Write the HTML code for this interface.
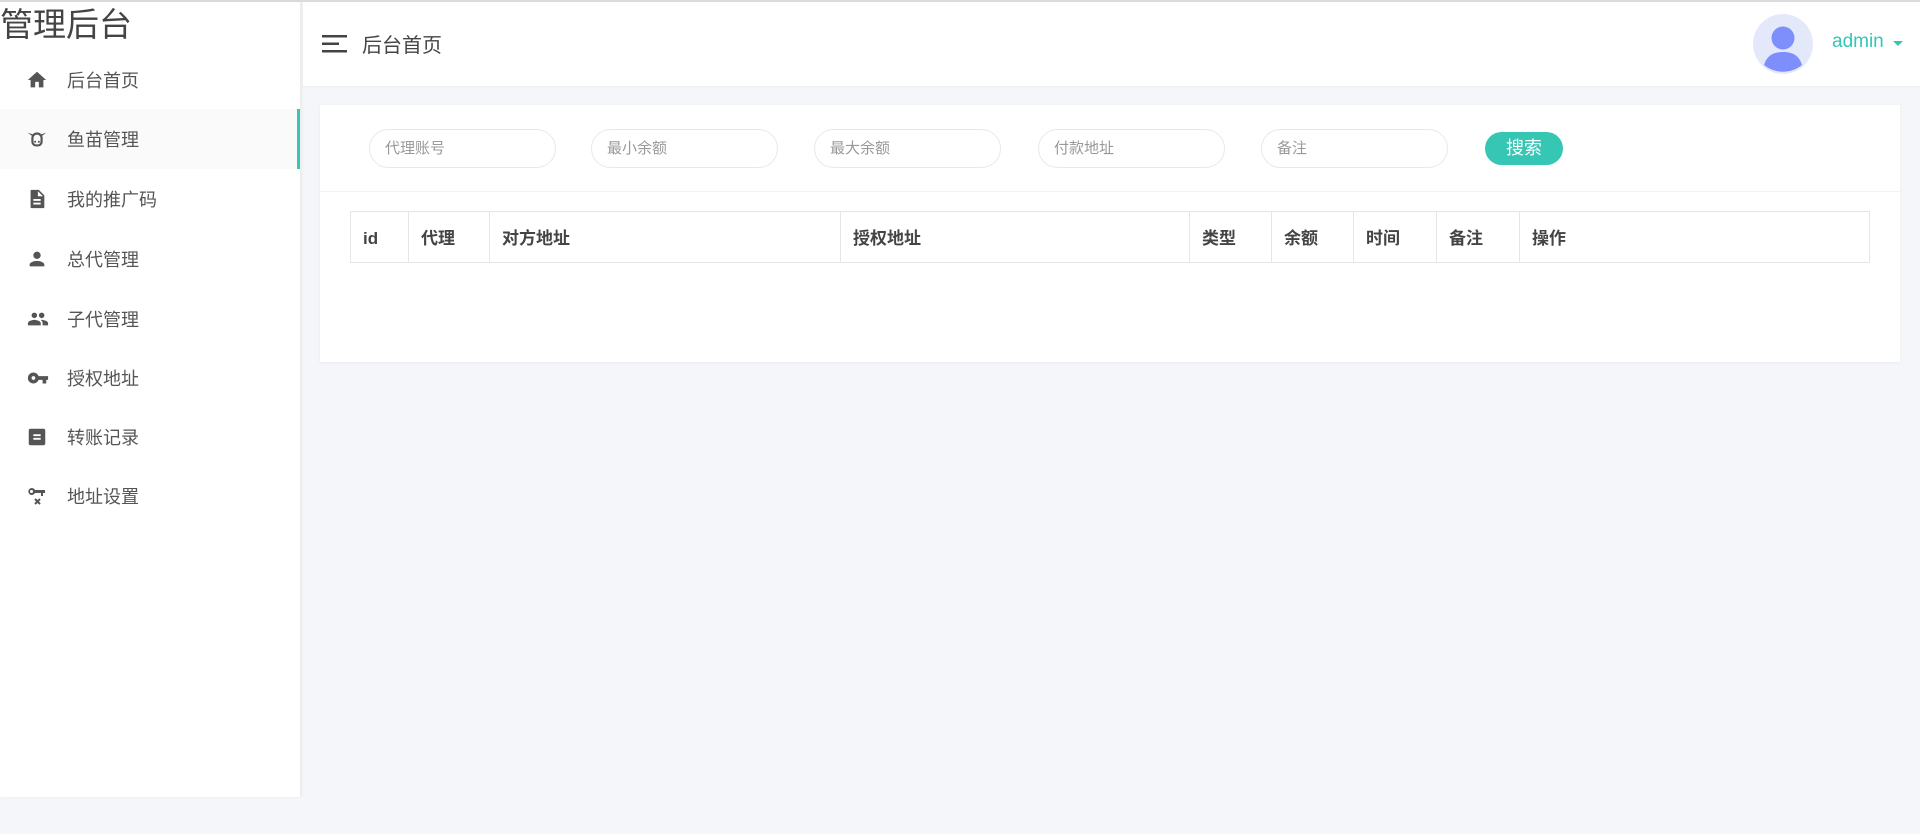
<!DOCTYPE html>
<html><head><meta charset="utf-8"><style>
*{margin:0;padding:0;box-sizing:border-box}
body{width:1920px;height:834px;overflow:hidden;background:#f4f6f9;font-family:"Liberation Sans","Noto Sans CJK SC",sans-serif;color:#555;position:relative}
.top{position:absolute;left:0;top:0;width:1920px;height:2px;background:#dcdcdc}
.side{position:absolute;left:0;top:2px;width:300px;height:795px;background:#fff;box-shadow:2px 0 3px rgba(0,0,0,.05)}
.logo{position:absolute;left:0;top:2px;font-size:33px;color:#444;line-height:42px}
.item{position:absolute;left:0;width:300px;height:60px;font-size:18px;color:#555}
.item span{position:absolute;left:67px;top:50%;transform:translateY(-50%);white-space:nowrap}
.item svg{position:absolute;left:26px;top:50%;transform:translateY(-50%)}
.active{background:#fafafa;border-right:3px solid #35c6b4}
.hdr{position:absolute;left:303px;top:2px;width:1617px;height:84px;background:#fff;box-shadow:0 1px 2px rgba(0,0,0,.04)}
.card{position:absolute;left:320px;top:105px;width:1580px;height:257px;background:#fff;box-shadow:0 1px 3px rgba(0,0,0,.05)}
.inp{position:absolute;top:24px;width:187px;height:39px;border:1px solid #e8e8e8;border-radius:20px;font-size:15px;color:#999;padding-left:15px;line-height:38px}
.btn{position:absolute;left:1165px;top:27px;width:78px;height:33px;background:#35c6b4;border-radius:17px;color:#fff;font-size:18px;text-align:center;line-height:33px}
.sep{position:absolute;left:0;top:86px;width:1580px;height:1px;background:#f2f2f2}
table{position:absolute;left:30px;top:106px;width:1520px;border-collapse:collapse;font-size:17px;font-weight:bold;color:#444}
td{border:1px solid #e6e6e6;height:51px;padding-left:12px;padding-top:4px;vertical-align:middle;line-height:20px}
</style></head><body>
<div class="top"></div>
<div class="side">
<div class="logo">管理后台</div>
<div class="item" style="top:48px"><svg width="22" height="22" viewBox="0 0 24 24"><path fill="#555" d="M10 20v-6h4v6h5v-8h3L12 3 2 12h3v8z"/></svg><span>后台首页</span></div>
<div class="item active" style="top:107px"><svg width="22" height="22" viewBox="0 0 24 24"><path fill="none" stroke="#555" stroke-width="2.4" d="M7 11a5 5 0 0 1 10 0v4a4 4 0 0 1-4 4h-2a4 4 0 0 1-4-4z"/><path fill="#555" d="M2 5l5 4 2-1.5zM22 5l-5 4-2-1.5zM9 14h2v2H9zM13 14h2v2h-2z"/></svg><span>鱼苗管理</span></div>
<div class="item" style="top:167px"><svg width="22" height="22" viewBox="0 0 24 24"><path fill="#555" d="M6 2h8l6 6v13a1 1 0 0 1-1 1H6a1 1 0 0 1-1-1V3a1 1 0 0 1 1-1zm7 1.5V9h5.5zM8 12v2h8v-2zm0 4v2h8v-2z"/></svg><span>我的推广码</span></div>
<div class="item" style="top:227px"><svg width="22" height="22" viewBox="0 0 24 24"><path fill="#555" d="M12 12a4 4 0 1 0 0-8 4 4 0 0 0 0 8zm0 2c-3 0-8 1.5-8 4v2h16v-2c0-2.5-5-4-8-4z"/></svg><span>总代管理</span></div>
<div class="item" style="top:287px"><svg width="24" height="22" viewBox="0 0 24 24"><path fill="#555" d="M16 11a3 3 0 1 0 0-6 3 3 0 0 0 0 6zm-8 0a3 3 0 1 0 0-6 3 3 0 0 0 0 6zm0 2c-2.3 0-7 1.2-7 3.5V19h14v-2.5C15 14.2 10.300 13 8 13zm8 0c-.3 0-.6 0-1 .1 1.2.8 2 1.9 2 3.4V19h6v-2.5c0-2.3-4.7-3.5-7-3.5z"/></svg><span>子代管理</span></div>
<div class="item" style="top:346px"><svg width="24" height="22" viewBox="0 0 24 24"><path fill="#555" d="M12.6 10A6 6 0 1 0 12.6 14H17v4h4v-4h2v-4zM7 14a2 2 0 1 1 0-4 2 2 0 0 1 0 4z"/></svg><span>授权地址</span></div>
<div class="item" style="top:405px"><svg width="22" height="22" viewBox="0 0 24 24"><path fill="#555" d="M5 3h14a2 2 0 0 1 2 2v14a2 2 0 0 1-2 2H5a2 2 0 0 1-2-2V5a2 2 0 0 1 2-2zm3 6v2h8V9zm0 4v2h8v-2z"/></svg><span>转账记录</span></div>
<div class="item" style="top:464px"><svg width="24" height="24" viewBox="0 0 24 24"><path fill="#555" d="M9 6a3.5 3.5 0 1 0 0 3h6v3h2V9h2V6zM5.5 9a1.5 1.5 0 1 1 0-3 1.5 1.5 0 0 1 0 3z"/><path stroke="#555" stroke-width="2" d="M9 15l5 5M14 15l-5 5"/></svg><span>地址设置</span></div>
</div>
<div class="hdr">
<svg style="position:absolute;left:19px;top:33px" width="26" height="18" viewBox="0 0 26 18"><rect x="0" y="0" width="25" height="2.5" fill="#444"/><rect x="0" y="7.5" width="17" height="2.5" fill="#444"/><rect x="0" y="15" width="25" height="2.5" fill="#444"/></svg>
<div style="position:absolute;left:59px;top:27px;font-size:20px;color:#444">后台首页</div>
<svg style="position:absolute;left:1450px;top:12px" width="60" height="60" viewBox="0 0 60 60"><circle cx="30" cy="30" r="30" fill="#e3e9fb"/><circle cx="30" cy="24" r="11.5" fill="#7e8ffc"/><path d="M11 51c3-10 10-13 19-13s16 3 19 13a30 30 0 0 1-38 0z" fill="#7e8ffc"/></svg>
<div style="position:absolute;left:1529px;top:29px;font-size:19px;color:#35c6b4">admin</div>
<div style="position:absolute;left:1590px;top:39px;width:0;height:0;border-left:5px solid transparent;border-right:5px solid transparent;border-top:5px solid #35c6b4"></div>
</div>
<div class="card">
<div class="inp" style="left:49px">代理账号</div>
<div class="inp" style="left:271px">最小余额</div>
<div class="inp" style="left:494px">最大余额</div>
<div class="inp" style="left:718px">付款地址</div>
<div class="inp" style="left:941px">备注</div>
<div class="btn">搜索</div>
<div class="sep"></div>
<table><tr>
<td style="width:58px">id</td><td style="width:81px">代理</td><td style="width:351px">对方地址</td><td style="width:349px">授权地址</td><td style="width:82px">类型</td><td style="width:82px">余额</td><td style="width:83px">时间</td><td style="width:83px">备注</td><td>操作</td>
</tr></table>
</div>
</body></html>
